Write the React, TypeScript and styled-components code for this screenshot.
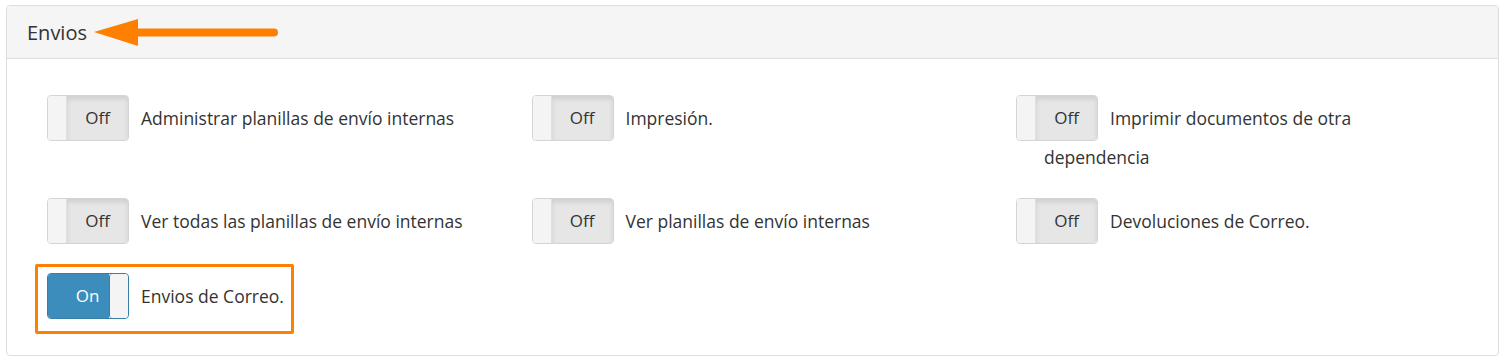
import React from "react";
import styled, { createGlobalStyle } from "styled-components";

const Global = createGlobalStyle`
  html, body { margin: 0; padding: 0; background: #fff; }
  body { font-family: "Open Sans", Lato, sans-serif; color: #333; }
`;

const Page = styled.div`
  padding: 5px 7px 0 6px;
`;

const Panel = styled.section`
  border: 1px solid #dddddd;
  border-radius: 4px;
  background: #fff;
  height: 351px;
  box-sizing: border-box;
  overflow: hidden;
`;

const Header = styled.header`
  display: flex;
  align-items: center;
  height: 52px;
  padding-left: 20px;
  background: #f5f5f5;
  border-bottom: 1px solid #dddddd;
`;

const Title = styled.h3`
  margin: 0;
  font-size: 20px;
  font-weight: 400;
  color: #333;
`;

const Arrow = styled.svg`
  margin-left: 7px;
  margin-top: 1px;
  display: block;
`;

const Body = styled.div`
  padding: 38px 20px 0 40px;
`;

const Grid = styled.div`
  display: grid;
  grid-template-columns: 484.5px 484.5px 400px;
  row-gap: 29px;
`;

const Item = styled.div`
  position: relative;
  padding-left: 28px;
  font-size: 17.5px;
  line-height: 28px;
  color: #333;
  padding-right: 20px;
`;

const Toggle = styled.span<{ $on: boolean }>`
  display: inline-flex;
  vertical-align: middle;
  margin-left: -28px;
  margin-right: 12px;
  width: 82px;
  height: 46px;
  box-sizing: border-box;
  border-radius: 4px;
  border: 1px solid ${(p) => (p.$on ? "#367fa9" : "#d4d4d4")};
  overflow: hidden;
  flex-direction: ${(p) => (p.$on ? "row" : "row-reverse")};
  margin-top: -2px;
  margin-bottom: 2px;
`;

const ToggleLabel = styled.span<{ $on: boolean }>`
  flex: 1;
  display: flex;
  align-items: center;
  justify-content: center;
  font-size: 17px;
  padding-left: ${(p) => (p.$on ? "18px" : "0")};
  background: ${(p) => (p.$on ? "#3c8dbc" : "#e6e6e6")};
  color: ${(p) => (p.$on ? "#fff" : "#333")};
  box-shadow: ${(p) => (p.$on ? "none" : "inset 0 3px 5px rgba(0,0,0,0.1)")};
`;

const Handle = styled.span<{ $on: boolean }>`
  width: 18px;
  background: #f4f4f4;
  border-radius: ${(p) => (p.$on ? "3px" : "0")};
  border-left: ${(p) => (p.$on ? "1px solid #367fa9" : "none")};
  border-right: ${(p) => (p.$on ? "none" : "1px solid #e0e0e0")};
`;

const Highlight = styled.span`
  position: absolute;
  left: -12px;
  top: -11px;
  width: 259px;
  height: 70px;
  box-sizing: border-box;
  border: 3px solid #ff8000;
  border-radius: 2px;
  pointer-events: none;
`;

type Perm = { label: string; on?: boolean; highlight?: boolean };

const perms: Perm[] = [
  { label: "Administrar planillas de envío internas" },
  { label: "Impresión." },
  { label: "Imprimir documentos de otra dependencia" },
  { label: "Ver todas las planillas de envío internas" },
  { label: "Ver planillas de envío internas" },
  { label: "Devoluciones de Correo." },
  { label: "Envios de Correo.", on: true, highlight: true },
];

export default function App() {
  return (
    <>
      <Global />
      <Page>
        <Panel>
          <Header>
            <Title>Envios</Title>
            <Arrow width="184" height="30" viewBox="0 0 184 30">
              <line x1="42" y1="14.5" x2="180" y2="14.5" stroke="#ff8000" strokeWidth="8" strokeLinecap="round" />
              <polygon points="0,14 44,1 44,28" fill="#ff8000" />
            </Arrow>
          </Header>
          <Body>
            <Grid>
              {perms.map((p) => (
                <Item key={p.label}>
                  {p.highlight && <Highlight />}
                  <Toggle $on={!!p.on}>
                    <ToggleLabel $on={!!p.on}>{p.on ? "On" : "Off"}</ToggleLabel>
                    <Handle $on={!!p.on} />
                  </Toggle>
                  {p.label}
                </Item>
              ))}
            </Grid>
          </Body>
        </Panel>
      </Page>
    </>
  );
}
